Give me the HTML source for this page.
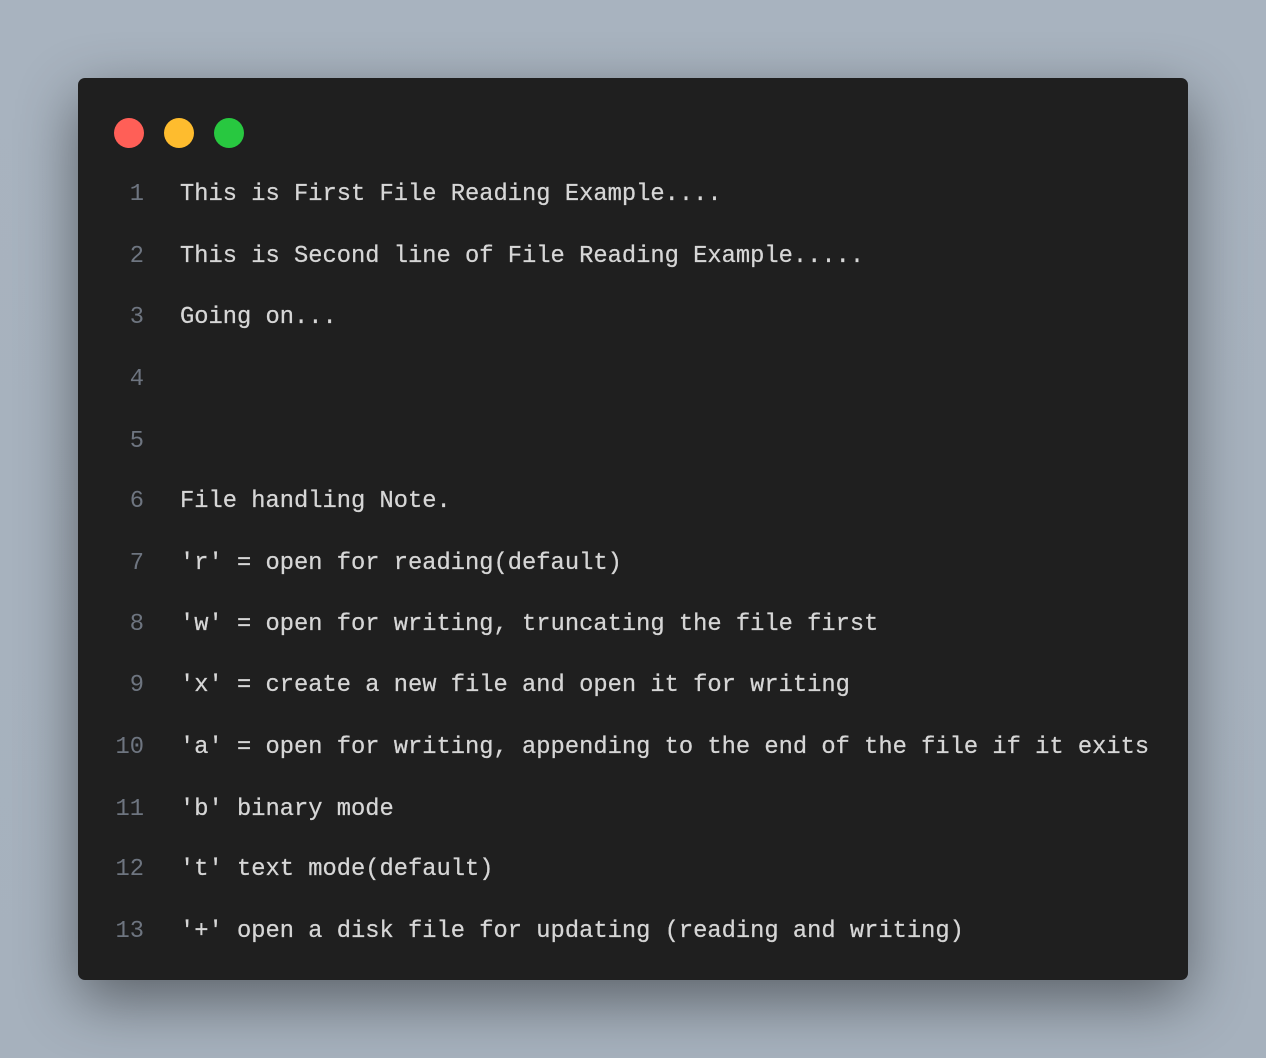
<!DOCTYPE html>
<html><head><style>
html,body{margin:0;padding:0}
body{width:1266px;height:1058px;background:linear-gradient(180deg,#a8b3bf,#a6b1bd);position:relative;overflow:hidden;font-family:"Liberation Mono",monospace}
.card{position:absolute;left:78px;top:78px;width:1110px;height:902px;background:#1f1f1f;border-radius:7px;box-shadow:0 20px 60px rgba(0,0,0,.45)}
.dot{position:absolute;top:40px;width:30px;height:30px;border-radius:50%}
.l{position:absolute;left:0;height:30px;line-height:30px;font-size:23.75px;white-space:pre;color:#d6d6d6;-webkit-text-stroke:0.25px #d6d6d6}
.n{position:absolute;right:1044px;color:#6e7580;text-align:right;-webkit-text-stroke:0}
.t{position:absolute;left:102px}
</style></head><body>
<div class="card">
<div class="dot" style="left:36px;background:#ff5f57"></div>
<div class="dot" style="left:86px;background:#febc2e"></div>
<div class="dot" style="left:136px;background:#28c840"></div>
<div class="l" style="top:102px;width:1110px"><span class="n">1</span><span class="t">This is First File Reading Example....</span></div>
<div class="l" style="top:164px;width:1110px"><span class="n">2</span><span class="t">This is Second line of File Reading Example.....</span></div>
<div class="l" style="top:225px;width:1110px"><span class="n">3</span><span class="t">Going on...</span></div>
<div class="l" style="top:287px;width:1110px"><span class="n">4</span></div>
<div class="l" style="top:349px;width:1110px"><span class="n">5</span></div>
<div class="l" style="top:409px;width:1110px"><span class="n">6</span><span class="t">File handling Note.</span></div>
<div class="l" style="top:471px;width:1110px"><span class="n">7</span><span class="t">'r' = open for reading(default)</span></div>
<div class="l" style="top:532px;width:1110px"><span class="n">8</span><span class="t">'w' = open for writing, truncating the file first</span></div>
<div class="l" style="top:593px;width:1110px"><span class="n">9</span><span class="t">'x' = create a new file and open it for writing</span></div>
<div class="l" style="top:655px;width:1110px"><span class="n">10</span><span class="t">'a' = open for writing, appending to the end of the file if it exits</span></div>
<div class="l" style="top:717px;width:1110px"><span class="n">11</span><span class="t">'b' binary mode</span></div>
<div class="l" style="top:777px;width:1110px"><span class="n">12</span><span class="t">'t' text mode(default)</span></div>
<div class="l" style="top:839px;width:1110px"><span class="n">13</span><span class="t">'+' open a disk file for updating (reading and writing)</span></div>
</div>
</body></html>
